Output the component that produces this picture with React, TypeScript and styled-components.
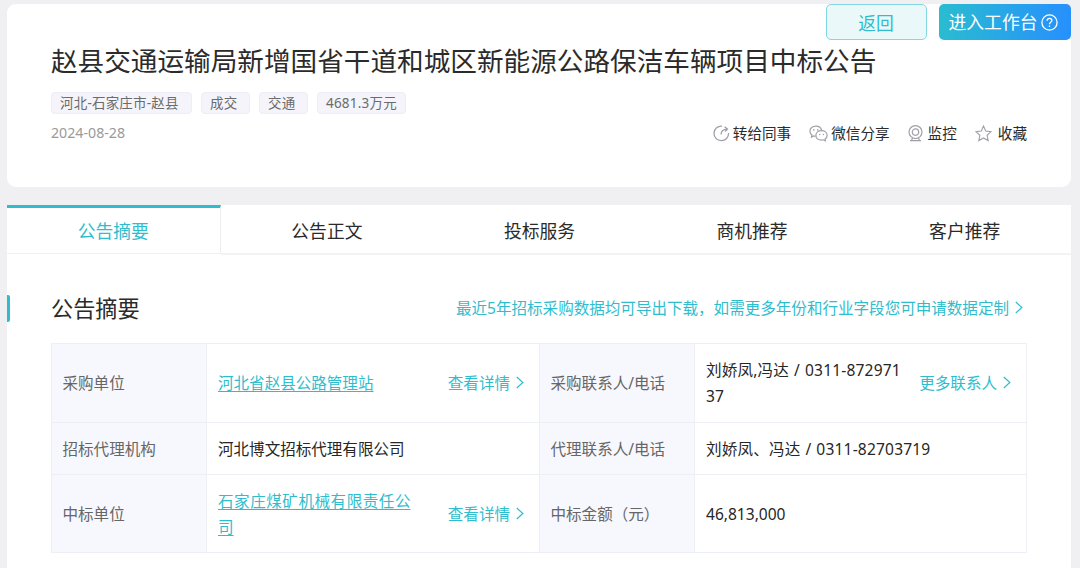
import React from "react";
import styled, { createGlobalStyle } from "styled-components";

const accent = "#2fbdce";

const GlobalStyle = createGlobalStyle`
  * { box-sizing: border-box; }
  body {
    margin: 0;
    height: 568px;
    overflow: hidden;
    background: #f0f0f3;
    font-family: "Noto Sans", "Noto Sans CJK SC", sans-serif;
    color: #2a2a2a;
  }
`;

const Page = styled.main`
  display: flex;
  flex-direction: column;
  gap: 18px;
  height: 568px;
  padding: 4px 9px 0 7px;
`;

const HeaderCard = styled.header`
  flex: none;
  height: 183px;
  border-radius: 9px;
  background: #fff;
`;

const HeaderActions = styled.div`
  display: flex;
  justify-content: flex-end;
  gap: 12px;
  height: 36px;
`;

const Button = styled.button<{ $primary?: boolean }>`
  display: flex;
  align-items: center;
  justify-content: center;
  gap: 4px;
  width: ${(p) => (p.$primary ? 132 : 101)}px;
  height: 36px;
  padding: ${(p) => (p.$primary ? "0 3px 0 0" : "0 1px 1px 0")};
  border: ${(p) => (p.$primary ? "none" : "1px solid #82d8e1")};
  border-radius: 5px;
  background: ${(p) => (p.$primary ? "linear-gradient(90deg, #2abcd0, #2690fd)" : "#eaf8fa")};
  color: ${(p) => (p.$primary ? "#fff" : accent)};
  font: 17.8px/34px "Noto Sans CJK SC", sans-serif;
`;

const ButtonLabel = styled.span`
  padding-bottom: 2px;
`;

const HeaderBody = styled.div`
  padding: 0 44px;
`;

const Title = styled.h1`
  margin: 0;
  height: 40px;
  font: 400 26.63px/39px "Noto Sans CJK SC", sans-serif;
  white-space: nowrap;
  color: #2b2b2b;
`;

const Tags = styled.div`
  display: flex;
  gap: 9px;
  margin-top: 12px;
`;

const Tag = styled.span<{ $width: number }>`
  width: ${(p) => p.$width}px;
  height: 22px;
  padding-left: 8px;
  border: 1px solid #eeedf4;
  border-radius: 4px;
  background: #f5f4fa;
  font-size: 13.5px;
  line-height: 21px;
  letter-spacing: 0.2px;
  white-space: nowrap;
  color: #6b6b6b;
`;

const MetaRow = styled.div`
  display: flex;
  justify-content: space-between;
  align-items: center;
  height: 22px;
  margin-top: 8px;
`;

const PublishDate = styled.time`
  font-size: 14.2px;
  line-height: 22px;
  color: #9a9a9a;
`;

const Tools = styled.div`
  display: flex;
  gap: 18px;
`;

const Tool = styled.span<{ $gap: number }>`
  display: flex;
  align-items: center;
  gap: ${(p) => p.$gap}px;
  font: 14.6px/22px "Noto Sans CJK SC", sans-serif;
  color: #2b2b2b;
  svg { flex: none; }
`;

const ContentCard = styled.section`
  flex: 1;
  background: #fff;
`;

const Tabs = styled.nav`
  display: flex;
  height: 49px;
`;

const Tab = styled.a<{ $active?: boolean }>`
  flex: 1 1 0;
  height: ${(p) => (p.$active ? 49 : 50)}px;
  border-top: ${(p) => (p.$active ? `3px solid ${accent}` : "3px solid #fff")};
  border-right: ${(p) => (p.$active ? "1px solid #eeeeef" : "none")};
  border-bottom: ${(p) => (p.$active ? "1px solid #f0f0f1" : "2px solid #f3f3f4")};
  font: 17.8px/44px "Noto Sans CJK SC", sans-serif;
  text-align: center;
  color: ${(p) => (p.$active ? accent : "#2a2a2a")};
`;

const SectionHead = styled.div`
  display: flex;
  align-items: center;
  height: 28px;
  margin-top: 40px;
`;

const Marker = styled.i`
  width: 3px;
  height: 27px;
  border-radius: 0 2px 2px 0;
  background: ${accent};
`;

const SectionTitle = styled.h2`
  flex: 1;
  margin: 0 0 2px 41px;
  font: 400 22.2px/28px "Noto Sans CJK SC", sans-serif;
`;

const MoreLink = styled.a<{ $end: number }>`
  display: flex;
  align-items: center;
  flex: none;
  gap: 6px;
  margin-right: ${(p) => p.$end}px;
  font-size: 15.55px;
  line-height: 26px;
  white-space: nowrap;
  color: ${accent};
`;

const Table = styled.div`
  display: grid;
  grid-template-columns: 155px 333px 155px 332px;
  grid-template-rows: 79px 52px 78px;
  width: 976px;
  margin: 21px 0 0 44px;
  border-left: 1px solid #eeeff5;
  border-top: 1px solid #eeeff5;
`;

const Cell = styled.div<{ $label?: boolean }>`
  display: flex;
  align-items: center;
  justify-content: space-between;
  padding-left: ${(p) => (p.$label ? 10.5 : 11)}px;
  border-right: 1px solid #eeeff5;
  border-bottom: 1px solid #eeeff5;
  background: ${(p) => (p.$label ? "#f7f8fd" : "#fff")};
  font-size: 15.55px;
  line-height: 26px;
  color: ${(p) => (p.$label ? "#666" : "#262626")};
`;

const CompanyLink = styled.a`
  width: 192.5px;
  text-align: justify;
  text-decoration: underline;
  text-decoration-thickness: 1px;
  text-underline-offset: 2px;
  color: ${accent};
`;

const Contact = styled.span<{ $width: number }>`
  width: ${(p) => p.$width}px;
  letter-spacing: 0.18px;
  word-spacing: 0.8px;
  word-break: break-all;
`;

const Chevron = () => (
  <svg width="8" height="14" viewBox="0 0 8 14" fill="none" stroke={accent} strokeWidth="1.2">
    <path d="M.8 1 6.8 6.5 .8 12" />
  </svg>
);

const HelpIcon = () => (
  <svg width="17" height="17" viewBox="0 0 17 17" fill="none" stroke="#fff" strokeWidth="1.3">
    <circle cx="8.5" cy="8.5" r="7.6" />
    <path d="M6.1 6.8c0-1.5 1-2.4 2.4-2.4s2.4.9 2.4 2.2c0 1.6-2.4 1.8-2.4 3.6M8.5 11.5v1.5" />
  </svg>
);

const ForwardIcon = () => (
  <svg width="17" height="17" viewBox="0 0 17 17" fill="none" stroke="#a0a0a8" strokeWidth="1.3">
    <path d="M9 1.1a7.3 7.3 0 1 0 6.6 7" />
    <path d="M8.1 9.6c0-3.4 1.5-5.2 6-5.4M11.6 1.8l2.9 2.3-2.3 2.5" />
  </svg>
);

const WechatIcon = () => (
  <svg width="19" height="17" viewBox="0 0 19 17" fill="none" stroke="#a0a0a8" strokeWidth="1.2">
    <path d="M6.5 11.4 4.7 11l-2.2 1.2.5-2.1A5.3 5.3 0 0 1 .9 6.2c0-2.9 2.6-5.1 5.9-5.1 3 0 5.4 1.8 5.8 4.3" />
    <path d="M12.5 5.7c3.2 0 5.6 2 5.6 4.7 0 1.6-.8 2.8-2 3.7l.3 1.7-1.9-1c-.6.2-1.3.3-2 .3-3.2 0-5.6-2-5.6-4.7s2.4-4.7 5.6-4.7Z" />
    <g fill="#a0a0a8" stroke="none">
      <circle cx="4.8" cy="4.9" r=".8" />
      <circle cx="8.7" cy="4.9" r=".8" />
      <circle cx="10.7" cy="9.4" r=".75" />
      <circle cx="14.4" cy="9.4" r=".75" />
    </g>
  </svg>
);

const CameraIcon = () => (
  <svg width="15" height="17" viewBox="0 0 15 17" fill="none" stroke="#a0a0a8" strokeWidth="1.2">
    <circle cx="7.5" cy="7.1" r="6.5" />
    <circle cx="7.5" cy="7.1" r="3.2" />
    <path d="m4.5 13.1-1 2.4M10.5 13.1l1 2.4M2 15.7h11" />
  </svg>
);

const StarIcon = () => (
  <svg width="17" height="17" viewBox="0 0 17 17" fill="none" stroke="#a0a0a8" strokeWidth="1.1">
    <path d="m8.5 1 2.2 5 5.4.6-4 3.7 1.1 5.3-4.7-2.7-4.7 2.7 1.1-5.3-4-3.7 5.4-.6Z" />
  </svg>
);

const tabs = ["公告摘要", "公告正文", "投标服务", "商机推荐", "客户推荐"];

const tags = [
  { text: "河北-石家庄市-赵县", width: 141 },
  { text: "成交", width: 49 },
  { text: "交通", width: 49 },
  { text: "4681.3万元", width: 89 },
];

export default function App() {
  return (
    <>
      <GlobalStyle />
      <Page>
        <HeaderCard>
          <HeaderActions>
            <Button>返回</Button>
            <Button $primary>
              <ButtonLabel>进入工作台</ButtonLabel>
              <HelpIcon />
            </Button>
          </HeaderActions>
          <HeaderBody>
            <Title>赵县交通运输局新增国省干道和城区新能源公路保洁车辆项目中标公告</Title>
            <Tags>
              {tags.map((t) => (
                <Tag key={t.text} $width={t.width}>{t.text}</Tag>
              ))}
            </Tags>
            <MetaRow>
              <PublishDate>2024-08-28</PublishDate>
              <Tools>
                <Tool $gap={3}><ForwardIcon />转给同事</Tool>
                <Tool $gap={3}><WechatIcon />微信分享</Tool>
                <Tool $gap={5}><CameraIcon />监控</Tool>
                <Tool $gap={6}><StarIcon />收藏</Tool>
              </Tools>
            </MetaRow>
          </HeaderBody>
        </HeaderCard>

        <ContentCard>
          <Tabs>
            {tabs.map((t, i) => (
              <Tab key={t} $active={i === 0}>{t}</Tab>
            ))}
          </Tabs>
          <SectionHead>
            <Marker />
            <SectionTitle>公告摘要</SectionTitle>
            <MoreLink $end={48}>
              最近5年招标采购数据均可导出下载，如需更多年份和行业字段您可申请数据定制
              <Chevron />
            </MoreLink>
          </SectionHead>
          <Table>
            <Cell $label>采购单位</Cell>
            <Cell>
              <CompanyLink>河北省赵县公路管理站</CompanyLink>
              <MoreLink $end={15}>查看详情<Chevron /></MoreLink>
            </Cell>
            <Cell $label>采购联系人/电话</Cell>
            <Cell>
              <Contact $width={198}>刘娇凤,冯达 / 0311-87297137</Contact>
              <MoreLink $end={15}>更多联系人<Chevron /></MoreLink>
            </Cell>
            <Cell $label>招标代理机构</Cell>
            <Cell>河北博文招标代理有限公司</Cell>
            <Cell $label>代理联系人/电话</Cell>
            <Cell><Contact $width={300}>刘娇凤、冯达 / 0311-82703719</Contact></Cell>
            <Cell $label>中标单位</Cell>
            <Cell>
              <CompanyLink>石家庄煤矿机械有限责任公司</CompanyLink>
              <MoreLink $end={15}>查看详情<Chevron /></MoreLink>
            </Cell>
            <Cell $label>中标金额（元）</Cell>
            <Cell>46,813,000</Cell>
          </Table>
        </ContentCard>
      </Page>
    </>
  );
}
